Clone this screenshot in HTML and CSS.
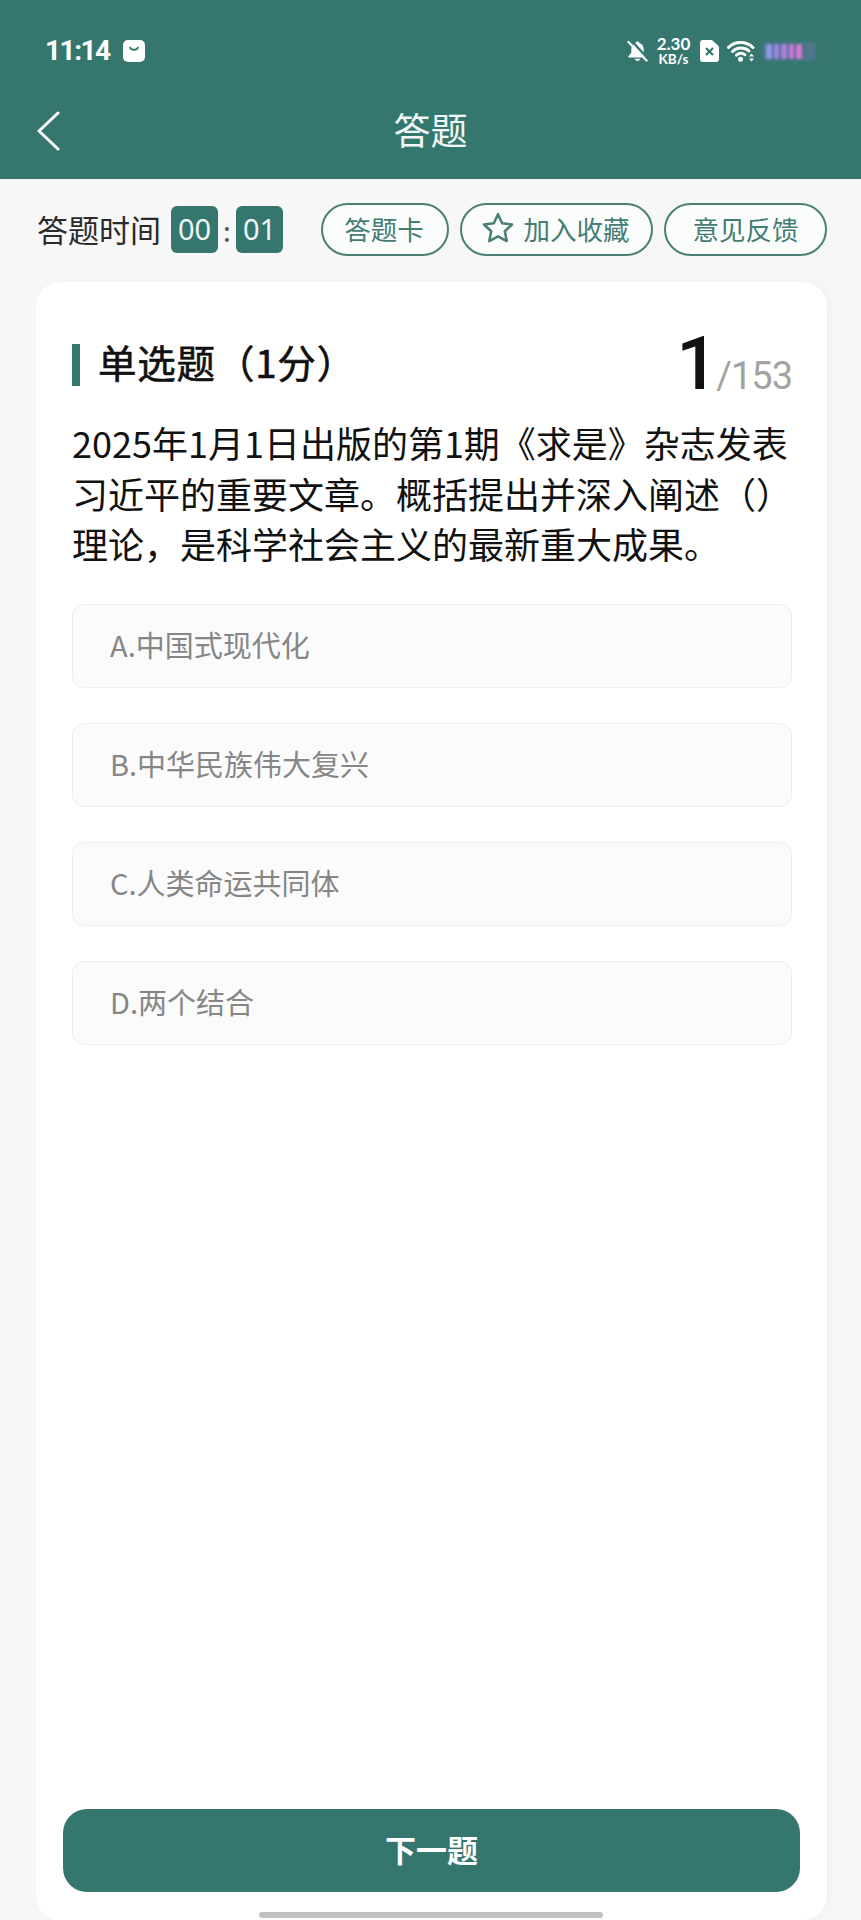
FILE: index.html
```html
<!DOCTYPE html>
<html lang="zh-CN">
<head>
<meta charset="utf-8">
<title>答题</title>
<link rel="stylesheet" href="styles.css">
</head>
<body>
<div class="page">
  <header class="header">
    <div class="status">
      <div class="status-left">
        <span class="clock">11:14</span>
        <svg class="ico-bag" viewBox="0 0 22 22"><rect width="22" height="22" rx="5" fill="#fff"/><path d="M7 7.500c1 3 7 3 8 0" fill="none" stroke="#35776e" stroke-width="1.800" stroke-linecap="round"/></svg>
      </div>
      <div class="status-right">
        <svg class="ico-bell" viewBox="0 0 22 22"><path d="M11 1c1.100 0 1.800.7 2 1.600 3 .9 4.500 3.400 4.500 6.600v3.600l3 3.700v1.300H1.500v-1.300l3-3.700V9.200c0-3.200 1.500-5.700 4.500-6.600.2-.9.900-1.600 2-1.600zM8 19.200h6c-.4 1.300-1.600 2.300-3 2.300s-2.600-1-3-2.300z" fill="#fff"/><path d="M4.500 0 22 19" stroke="#35776e" stroke-width="2.500"/><path d="M1.500 1.500 20.500 21" stroke="#fff" stroke-width="2.200" stroke-linecap="round"/></svg>
        <div class="speed"><span class="speed-num">2.30</span><span class="speed-unit">KB/s</span></div>
        <svg class="ico-sim" viewBox="0 0 19 22"><path d="M3 0h9l7 6.500V19a3 3 0 0 1-3 3H3a3 3 0 0 1-3-3V3a3 3 0 0 1 3-3z" fill="#fff"/><path d="M6 8l7 7M13 8l-7 7" stroke="#35776e" stroke-width="2.200"/></svg>
        <svg class="ico-wifi" viewBox="0 0 28 22"><g fill="none" stroke="#fff" stroke-width="3" stroke-linecap="round"><path d="M1.500 7.500C8 .8 19 .8 26 7.500"/><path d="M5.500 11.500C10 7 17.500 7 22 11"/><path d="M9.500 15.200c2.500-2.200 6-2.200 8.500-.5"/></g><circle cx="13.500" cy="19.300" r="2.500" fill="#fff"/><path d="M24.500 13.500l2.500 3h-5zM24.500 21.500l-2.500-3h5z" fill="#fff"/></svg>
        <div class="battery">
          <span class="cell c1"></span><span class="cell c2"></span><span class="cell c3"></span><span class="cell c4"></span><span class="cell c5"></span>
        </div>
      </div>
    </div>
    <div class="titlebar">
      <svg class="back" viewBox="0 0 24 40"><path d="M22 2 3 20l19 18" fill="none" stroke="#fff" stroke-width="3" stroke-linecap="round" stroke-linejoin="round"/></svg>
      <h1 class="title">答题</h1>
    </div>
  </header>

  <div class="toolbar">
    <div class="timer">
      <span class="timer-label">答题时间</span>
      <span class="timer-box">00</span>
      <span class="timer-colon">:</span>
      <span class="timer-box">01</span>
    </div>
    <div class="actions">
      <span class="pill pill-card">答题卡</span>
      <span class="pill pill-fav"><svg class="star" viewBox="0 0 32 32"><path d="M16 3l3.900 8.500 9.300 1.200-6.800 6.400 1.800 9.200-8.200-4.500-8.200 4.500 1.800-9.200-6.800-6.400 9.300-1.200z" fill="none" stroke="#4a7f76" stroke-width="2.400" stroke-linejoin="round"/></svg>加入收藏</span>
      <span class="pill pill-feedback">意见反馈</span>
    </div>
  </div>

  <main class="card">
    <div class="q-head">
      <div class="q-type"><span class="q-mark"></span><span class="q-label">单选题（1分）</span></div>
      <div class="q-count"><span class="q-now">1</span><span class="q-total">/153</span></div>
    </div>
    <p class="q-text">2025年1月1日出版的第1期《求是》杂志发表习近平的重要文章。概括提出并深入阐述（）理论，是科学社会主义的最新重大成果。</p>
    <ul class="options">
      <li class="option">A.中国式现代化</li>
      <li class="option">B.中华民族伟大复兴</li>
      <li class="option">C.人类命运共同体</li>
      <li class="option">D.两个结合</li>
    </ul>
    <button class="next">下一题</button>
  </main>
  <div class="home-bar"></div>
</div>
</body>
</html>
```
FILE: styles.css
```css
* { box-sizing: border-box; }
html, body { margin: 0; padding: 0; }
body {
  font-family: "Noto Sans CJK SC", "Noto Sans", sans-serif;
  background: #f7f7f8;
  color: #111;
}
.page {
  position: relative;
  width: 861px;
  height: 1920px;
  overflow: hidden;
  display: flex;
  flex-direction: column;
  background: #f7f7f8;
}
.header { height: 179px; background: #35776e; color: #fff; flex: none; }
.status {
  height: 100px;
  padding: 29px 45px 0 45px;
  display: flex;
  justify-content: space-between;
  align-items: flex-start;
}
.status-left { display: flex; align-items: center; gap: 13px; height: 44px; }
.clock { font-family: Roboto, sans-serif; font-weight: 700; font-size: 28px; line-height: 44px; letter-spacing: -1.500px; }
.ico-bag { width: 22px; height: 22px; }
.status-right { display: flex; align-items: center; height: 44px; }
.ico-bell { width: 21px; height: 22px; margin-right: 8px; }
.speed { display: flex; flex-direction: column; align-items: center; font-family: Lato, sans-serif; font-weight: 700; width: 35px; margin-right: 9px; }
.speed-num { font-size: 17px; line-height: 16px; }
.speed-unit { font-size: 13.500px; line-height: 14px; }
.ico-sim { width: 19px; height: 22px; margin-right: 8px; }
.ico-wifi { width: 28px; height: 22px; margin-right: 8px; }
.battery {
  width: 53px;
  height: 19px;
  display: flex;
  gap: 2px;
  padding: 2px 0 2px 3px;
  background: #4d7689;
  border-radius: 4px;
  filter: blur(1px);
}
.cell { width: 5.500px; height: 15px; border-radius: 2px; }
.c1 { background: #8d96e6; }
.c2 { background: #9a85e2; }
.c3 { background: #a87fdc; }
.c4 { background: #c578d8; }
.c5 { background: #d576cf; }
.titlebar { position: relative; height: 79px; display: flex; align-items: center; justify-content: center; }
.back { position: absolute; left: 36px; top: 11px; width: 24px; height: 40px; }
.title { margin: 0; font-size: 37px; font-weight: 400; line-height: 50px; position: relative; top: -11px; color: #f1f7f6; }

.toolbar {
  height: 103px;
  flex: none;
  padding: 24px 34px 0 37px;
  display: flex;
  justify-content: space-between;
  align-items: flex-start;
}
.timer { display: flex; align-items: center; height: 53px; color: #2b2b2b; }
.timer-label { font-size: 31px; line-height: 51px; margin: 0 10px 2px 0; }
.timer-box {
  width: 47px;
  height: 47px;
  border-radius: 6px;
  background: #35776e;
  color: #eef5f4;
  font-family: "Noto Sans", sans-serif;
  font-size: 29px;
  line-height: 45px;
  text-align: center;
}
.timer-colon { width: 18px; text-align: center; font-size: 28px; color: #555; line-height: 44px; }
.actions { display: flex; gap: 11px; }
.pill {
  height: 53px;
  border: 2px solid #4a7f76;
  border-radius: 27px;
  display: flex;
  align-items: center;
  justify-content: center;
  color: #447d74;
  font-size: 26.500px;
  background: #fbfcfc;
  padding-bottom: 2px;
}
.pill-card { width: 128px; padding-right: 2px; }
.pill-fav { width: 193px; gap: 9px; padding: 0 3px 3px 0; }
.pill-feedback { width: 163px; }
.star { width: 34px; height: 34px; }

.card {
  flex: 1;
  margin: 0 34px 0 36px;
  padding: 62px 35px 28px 36px;
  background: #fff;
  border-radius: 24px;
  box-shadow: 3px 0 7px rgba(0, 0, 0, 0.03);
  display: flex;
  flex-direction: column;
  min-height: 0;
}
.q-head { display: flex; justify-content: space-between; align-items: flex-end; height: 42px; }
.q-type { display: flex; align-items: center; height: 42px; font-size: 38.500px; font-weight: 400; color: #111; }
.q-mark { width: 8px; height: 42px; background: #35776e; margin-right: 18px; flex: none; }
.q-label { line-height: 42px; margin-top: -9px; letter-spacing: 0.8px; -webkit-text-stroke: 0.6px #111; }
.q-count { display: flex; align-items: baseline; height: 43px; position: relative; }
.q-now { font-family: Roboto, sans-serif; font-size: 74px; line-height: 42px; color: #111; font-weight: 500; margin-right: -2px; }
.q-total { font-family: Roboto, sans-serif; font-size: 38px; line-height: 42px; color: #a3a3a3; letter-spacing: -1px; }
.q-text { margin: 31px 0 0; font-size: 36px; line-height: 50.500px; color: #111; }
.options { list-style: none; margin: 35px 0 0; padding: 0; display: flex; flex-direction: column; gap: 35px; }
.option {
  height: 84px;
  border: 1px solid #ededef;
  border-radius: 12px;
  background: #fbfbfc;
  padding-left: 37px;
  font-size: 29px;
  line-height: 79px;
  color: #868686;
}
.next {
  margin: auto -8px 0 -9px;
  height: 83px;
  border: 0;
  border-radius: 24px;
  background: #35776e;
  color: #fff;
  font-family: inherit;
  font-size: 31px;
  font-weight: 700;
  padding: 0 0 5px;
}
.home-bar {
  position: absolute;
  left: 259px;
  top: 1912px;
  width: 344px;
  height: 6px;
  border-radius: 3px;
  background: #c0c0c0;
}
```
